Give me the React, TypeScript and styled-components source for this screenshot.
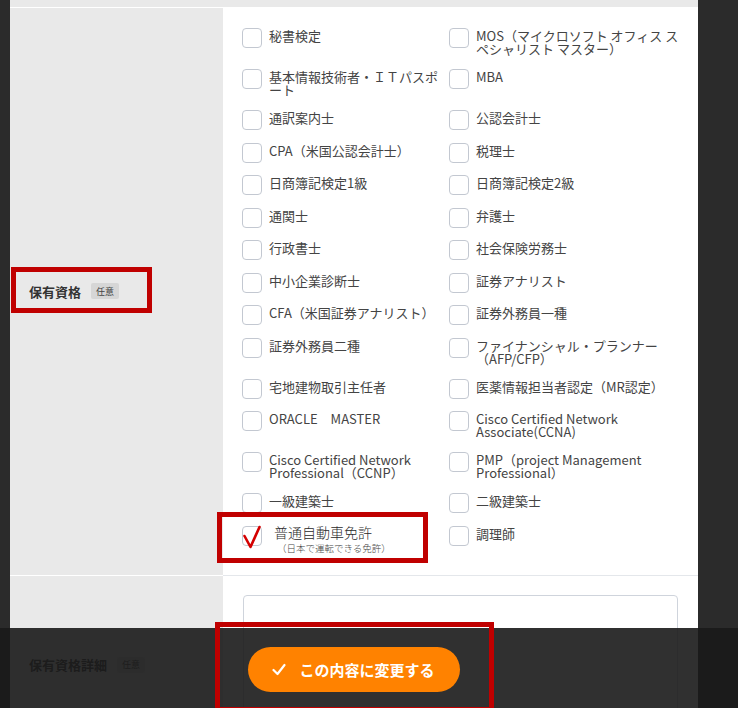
import React from 'react';
import styled, { createGlobalStyle } from 'styled-components';

const GlobalStyle = createGlobalStyle`
    html, body {
        margin: 0;
        padding: 0;
        overflow: hidden;
        background: #2b2b2b;
    }
    body {
        font-family: 'Noto Sans CJK JP', 'Noto Sans', sans-serif;
        color: #444;
    }
`;

const Page = styled.div`
    height: 708px;
    overflow: hidden;
    padding-left: 10px;
`;

const Panel = styled.div`
    width: 688px;
    background: #fff;
`;

const TopBand = styled.div`
    height: 7px;
    background: #e9e9e9;
    border-bottom: 1px solid #fff;
`;

const FormRow = styled.div`
    display: grid;
    grid-template-columns: 213px 1fr;
`;

const LabelCell = styled.div`
    display: flex;
    align-items: center;
    padding-left: 19px;
    background: #e9e9e9;
    border-bottom: 1px solid #fff;
`;

const FieldCell = styled.div<{ $pad: string }>`
    padding: ${(p) => p.$pad};
    border-bottom: 1px solid #e4e7eb;
`;

const LabelGroup = styled.div`
    position: relative;
    display: inline-flex;
    align-items: center;
    gap: 10px;
    height: 20px;
`;

const LabelText = styled.span`
    font-size: 13px;
    font-weight: 700;
    color: #333;
`;

const Badge = styled.span`
    display: inline-flex;
    align-items: center;
    height: 16px;
    padding: 0 5px;
    font-size: 9px;
    color: #444;
    background: #d6d6d6;
    border-radius: 2px;
`;

const RedFrame = styled.span<{ $top: number; $left: number; $right: number; $bottom: number }>`
    position: absolute;
    top: ${(p) => p.$top}px;
    left: ${(p) => p.$left}px;
    right: ${(p) => p.$right}px;
    bottom: ${(p) => p.$bottom}px;
    border: 5px solid #c00000;
    pointer-events: none;
`;

const CheckGrid = styled.div`
    display: grid;
    grid-template-columns: 207px 1fr;
    row-gap: 12.5px;
    align-items: start;
`;

const CheckItem = styled.label`
    position: relative;
    display: flex;
    align-items: flex-start;
    gap: 7px;
`;

const Box = styled.span`
    position: relative;
    flex: none;
    width: 20px;
    height: 20px;
    box-sizing: border-box;
    border: 1px solid #c3c8d1;
    border-radius: 4px;
    background: #fff;
`;

const Tick = styled.svg`
    position: absolute;
    left: -1px;
    top: -2px;
`;

const ItemText = styled.span`
    padding: 1px 0 1.5px;
    font-size: 13px;
    line-height: 13px;
    color: #444;
`;

const CheckedText = styled.span`
    display: flex;
    flex-direction: column;
    margin: -1px 0 0 5px;
    font-size: 14px;
    line-height: 14px;
    color: #2a2a2a;
    font-weight: 300;
`;

const SubNote = styled.span`
    margin-left: 3px;
    margin-top: 3.5px;
    font-size: 9.5px;
    line-height: 13px;
    color: #444;
`;

const DetailArea = styled.div`
    height: 138px;
    border: 1px solid #cfd4dc;
    border-radius: 4px;
    background: #fff;
`;

const ActionBar = styled.div`
    position: fixed;
    left: 0;
    right: 0;
    bottom: 0;
    height: 80px;
    box-sizing: border-box;
    display: flex;
    justify-content: center;
    align-items: flex-start;
    padding: 19px 40px 0 10px;
    background: rgba(25, 25, 25, 0.9);
`;

const SubmitWrap = styled.div`
    position: relative;
`;

const SubmitButton = styled.button`
    display: inline-flex;
    align-items: center;
    gap: 13px;
    height: 45px;
    padding: 0 25px 0 24px;
    border: none;
    border-radius: 23px;
    background: #ff8200;
    color: #fff;
    font-family: 'Noto Sans CJK JP', 'Noto Sans', sans-serif;
    font-size: 15px;
    font-weight: 700;
    cursor: pointer;
`;

type Item = { label: string; sub?: string; checked?: boolean };

const ITEMS: Item[] = [
    { label: '秘書検定' },
    { label: 'MOS（マイクロソフト オフィス スペシャリスト マスター）' },
    { label: '基本情報技術者・ＩＴパスポート' },
    { label: 'MBA' },
    { label: '通訳案内士' },
    { label: '公認会計士' },
    { label: 'CPA（米国公認会計士）' },
    { label: '税理士' },
    { label: '日商簿記検定1級' },
    { label: '日商簿記検定2級' },
    { label: '通関士' },
    { label: '弁護士' },
    { label: '行政書士' },
    { label: '社会保険労務士' },
    { label: '中小企業診断士' },
    { label: '証券アナリスト' },
    { label: 'CFA（米国証券アナリスト）' },
    { label: '証券外務員一種' },
    { label: '証券外務員二種' },
    { label: 'ファイナンシャル・プランナー（AFP/CFP）' },
    { label: '宅地建物取引主任者' },
    { label: '医薬情報担当者認定（MR認定）' },
    { label: 'ORACLE　MASTER' },
    { label: 'Cisco Certified Network Associate(CCNA)' },
    { label: 'Cisco Certified Network Professional（CCNP）' },
    { label: 'PMP（project Management Professional）' },
    { label: '一級建築士' },
    { label: '二級建築士' },
    { label: '普通自動車免許', sub: '（日本で運転できる免許）', checked: true },
    { label: '調理師' },
];

const Qualification = ({ item }: { item: Item }) => (
    <CheckItem>
        <Box>
            {item.checked && (
                <Tick width="22" height="24" viewBox="0 0 22 24">
                    <polyline
                        points="2.5,11 8.5,22 17.5,2"
                        fill="none"
                        stroke="#d40000"
                        strokeWidth="2.6"
                        strokeLinecap="round"
                        strokeLinejoin="round"
                    />
                </Tick>
            )}
        </Box>
        {item.checked ? (
            <CheckedText>
                {item.label}
                <SubNote>{item.sub}</SubNote>
            </CheckedText>
        ) : (
            <ItemText>{item.label}</ItemText>
        )}
        {item.checked && <RedFrame $top={-14} $left={-25} $right={21} $bottom={-8} />}
    </CheckItem>
);

export default function App() {
    return (
        <>
            <GlobalStyle />
            <Page>
                <Panel>
                    <TopBand />
                    <FormRow>
                        <LabelCell>
                            <LabelGroup>
                                <LabelText>保有資格</LabelText>
                                <Badge>任意</Badge>
                                <RedFrame $top={-14} $left={-18} $right={-33} $bottom={-12} />
                            </LabelGroup>
                        </LabelCell>
                        <FieldCell $pad="20px 12px 19.5px 19px">
                            <CheckGrid>
                                {ITEMS.map((item) => (
                                    <Qualification key={item.label} item={item} />
                                ))}
                            </CheckGrid>
                        </FieldCell>
                    </FormRow>
                    <FormRow>
                        <LabelCell>
                            <LabelGroup>
                                <LabelText>保有資格詳細</LabelText>
                                <Badge>任意</Badge>
                            </LabelGroup>
                        </LabelCell>
                        <FieldCell $pad="19px 20px">
                            <DetailArea />
                        </FieldCell>
                    </FormRow>
                </Panel>
            </Page>
            <ActionBar>
                <SubmitWrap>
                    <SubmitButton>
                        <svg width="14" height="13" viewBox="0 0 14 13">
                            <polyline
                                points="1.5,7 5.5,11 12.5,2"
                                fill="none"
                                stroke="#fff"
                                strokeWidth="2.2"
                                strokeLinecap="round"
                                strokeLinejoin="round"
                            />
                        </svg>
                        この内容に変更する
                    </SubmitButton>
                    <RedFrame $top={-25} $left={-33} $right={-34} $bottom={-20} />
                </SubmitWrap>
            </ActionBar>
        </>
    );
}
